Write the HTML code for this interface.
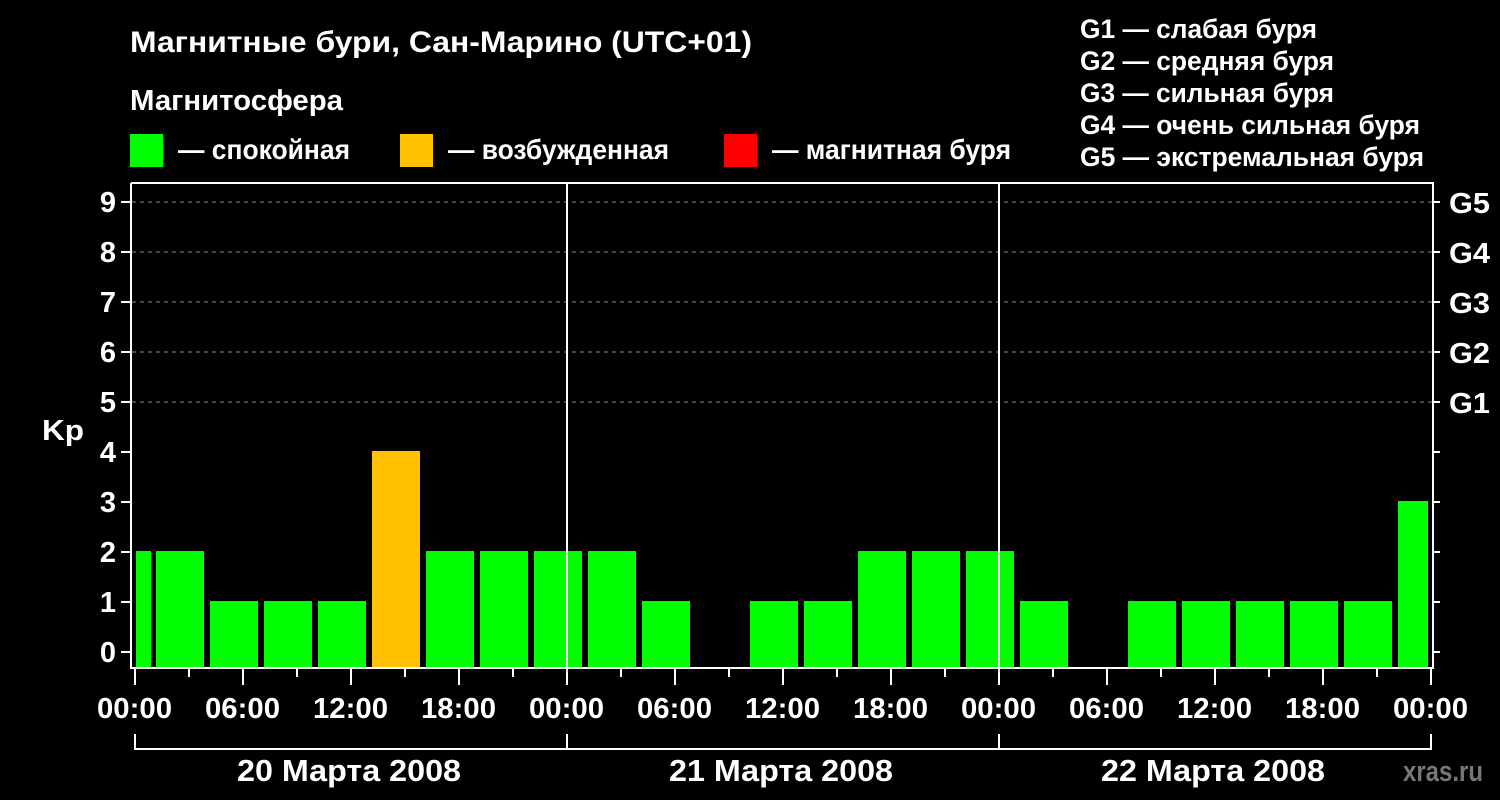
<!DOCTYPE html>
<html><head><meta charset="utf-8"><style>
html,body{margin:0;padding:0;background:#000;width:1500px;height:800px;overflow:hidden}
svg text{font-family:"Liberation Sans",sans-serif;font-weight:bold;fill:#fff}
</style></head><body>
<svg width="1500" height="800" viewBox="0 0 1500 800" xmlns="http://www.w3.org/2000/svg">
<rect width="1500" height="800" fill="#000"/>
<text x="130" y="52" font-size="30" textLength="622" lengthAdjust="spacingAndGlyphs">Магнитные бури, Сан-Марино (UTC+01)</text>
<text x="130" y="110" font-size="29" textLength="213" lengthAdjust="spacingAndGlyphs">Магнитосфера</text>
<rect x="130" y="134" width="33" height="33" fill="#00ff00"/>
<text x="178" y="159" font-size="28" textLength="172" lengthAdjust="spacingAndGlyphs">— спокойная</text>
<rect x="400" y="134" width="33" height="33" fill="#ffc000"/>
<text x="448" y="159" font-size="28" textLength="221" lengthAdjust="spacingAndGlyphs">— возбужденная</text>
<rect x="724" y="134" width="33" height="33" fill="#ff0000"/>
<text x="772" y="159" font-size="28" textLength="239" lengthAdjust="spacingAndGlyphs">— магнитная буря</text>
<text x="1080" y="38" font-size="27" textLength="237" lengthAdjust="spacingAndGlyphs">G1 — слабая буря</text>
<text x="1080" y="70" font-size="27" textLength="254" lengthAdjust="spacingAndGlyphs">G2 — средняя буря</text>
<text x="1080" y="102" font-size="27" textLength="254" lengthAdjust="spacingAndGlyphs">G3 — сильная буря</text>
<text x="1080" y="134" font-size="27" textLength="340" lengthAdjust="spacingAndGlyphs">G4 — очень сильная буря</text>
<text x="1080" y="166" font-size="27" textLength="344" lengthAdjust="spacingAndGlyphs">G5 — экстремальная буря</text>
<g stroke="#888" stroke-width="1" stroke-dasharray="4,4">
<line x1="132" y1="202" x2="1432" y2="202"/><line x1="132" y1="252" x2="1432" y2="252"/>
<line x1="132" y1="302" x2="1432" y2="302"/><line x1="132" y1="352" x2="1432" y2="352"/>
<line x1="132" y1="402" x2="1432" y2="402"/>
</g>
<g fill="#00ff00">
<rect x="136" y="551" width="15" height="117"/>
<rect x="156" y="551" width="48" height="117"/>
<rect x="210" y="601" width="48" height="67"/>
<rect x="264" y="601" width="48" height="67"/>
<rect x="318" y="601" width="48" height="67"/>
<rect x="372" y="451" width="48" height="217" fill="#ffc000"/>
<rect x="426" y="551" width="48" height="117"/>
<rect x="480" y="551" width="48" height="117"/>
<rect x="534" y="551" width="48" height="117"/>
<rect x="588" y="551" width="48" height="117"/>
<rect x="642" y="601" width="48" height="67"/>
<rect x="750" y="601" width="48" height="67"/>
<rect x="804" y="601" width="48" height="67"/>
<rect x="858" y="551" width="48" height="117"/>
<rect x="912" y="551" width="48" height="117"/>
<rect x="966" y="551" width="48" height="117"/>
<rect x="1020" y="601" width="48" height="67"/>
<rect x="1128" y="601" width="48" height="67"/>
<rect x="1182" y="601" width="48" height="67"/>
<rect x="1236" y="601" width="48" height="67"/>
<rect x="1290" y="601" width="48" height="67"/>
<rect x="1344" y="601" width="48" height="67"/>
<rect x="1398" y="501" width="30" height="167"/>
</g>
<g stroke="#fff" stroke-width="2" fill="none">
<path d="M131 183 V668 H1433 V183 H131"/>
<line x1="567" y1="183" x2="567" y2="668"/>
<line x1="999" y1="183" x2="999" y2="668"/>
<path d="M121 652h10M121 602h10M121 552h10M121 502h10M121 452h10M121 402h10M121 352h10M121 302h10M121 252h10M121 202h10"/>
<path d="M1433 652h7M1433 602h7M1433 552h7M1433 502h7M1433 452h7M1433 402h7M1433 352h7M1433 302h7M1433 252h7M1433 202h7"/>
<path d="M135 668v17M243 668v17M351 668v17M459 668v17M567 668v17M675 668v17M783 668v17M891 668v17M999 668v17M1107 668v17M1215 668v17M1323 668v17M1431 668v17"/>
<path d="M189 668v9M297 668v9M405 668v9M513 668v9M621 668v9M729 668v9M837 668v9M945 668v9M1053 668v9M1161 668v9M1269 668v9M1377 668v9"/>
<path d="M135 734v15H1431v-15M567 734v15M999 734v15"/>
</g>
<g font-size="29" text-anchor="end">
<text x="116" y="662">0</text><text x="116" y="612">1</text><text x="116" y="562">2</text>
<text x="116" y="512">3</text><text x="116" y="462">4</text><text x="116" y="412">5</text>
<text x="116" y="362">6</text><text x="116" y="312">7</text><text x="116" y="262">8</text>
<text x="116" y="212">9</text>
</g>
<text x="42" y="440" font-size="29" textLength="42" lengthAdjust="spacingAndGlyphs">Kp</text>
<g font-size="29">
<text x="1449" y="213" textLength="41" lengthAdjust="spacingAndGlyphs">G5</text>
<text x="1449" y="263" textLength="41" lengthAdjust="spacingAndGlyphs">G4</text>
<text x="1449" y="313" textLength="41" lengthAdjust="spacingAndGlyphs">G3</text>
<text x="1449" y="363" textLength="41" lengthAdjust="spacingAndGlyphs">G2</text>
<text x="1449" y="413" textLength="41" lengthAdjust="spacingAndGlyphs">G1</text>
</g>
<g font-size="29">
<text x="97" y="718" textLength="75" lengthAdjust="spacingAndGlyphs">00:00</text>
<text x="205" y="718" textLength="75" lengthAdjust="spacingAndGlyphs">06:00</text>
<text x="313" y="718" textLength="75" lengthAdjust="spacingAndGlyphs">12:00</text>
<text x="421" y="718" textLength="75" lengthAdjust="spacingAndGlyphs">18:00</text>
<text x="529" y="718" textLength="75" lengthAdjust="spacingAndGlyphs">00:00</text>
<text x="637" y="718" textLength="75" lengthAdjust="spacingAndGlyphs">06:00</text>
<text x="745" y="718" textLength="75" lengthAdjust="spacingAndGlyphs">12:00</text>
<text x="853" y="718" textLength="75" lengthAdjust="spacingAndGlyphs">18:00</text>
<text x="961" y="718" textLength="75" lengthAdjust="spacingAndGlyphs">00:00</text>
<text x="1069" y="718" textLength="75" lengthAdjust="spacingAndGlyphs">06:00</text>
<text x="1177" y="718" textLength="75" lengthAdjust="spacingAndGlyphs">12:00</text>
<text x="1285" y="718" textLength="75" lengthAdjust="spacingAndGlyphs">18:00</text>
<text x="1393" y="718" textLength="75" lengthAdjust="spacingAndGlyphs">00:00</text>
<text x="237" y="781" font-size="31" textLength="224" lengthAdjust="spacingAndGlyphs">20 Марта 2008</text>
<text x="669" y="781" font-size="31" textLength="224" lengthAdjust="spacingAndGlyphs">21 Марта 2008</text>
<text x="1101" y="781" font-size="31" textLength="224" lengthAdjust="spacingAndGlyphs">22 Марта 2008</text>
</g>
<text x="1403" y="781" font-size="29" textLength="80" lengthAdjust="spacingAndGlyphs" style="fill:#777">xras.ru</text>
</svg>
</body></html>
